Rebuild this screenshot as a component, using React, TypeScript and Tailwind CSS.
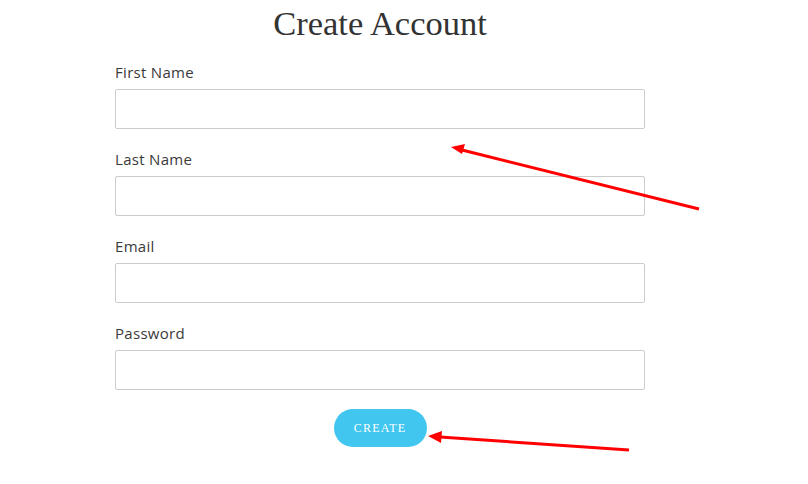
export default function App() {
  const fields = ['First Name', 'Last Name', 'Email', 'Password'];
  return (
    <div className="relative w-[808px] h-[484px] bg-white overflow-hidden">
      <div className="ml-[115px] w-[530px] flex flex-col pt-[3px]">
        <h1 className="text-center text-[34.5px] leading-[40px] text-[#333333] font-['Liberation_Serif',serif]">
          Create Account
        </h1>
        <div className="mt-[20px] flex flex-col gap-[21px]">
          {fields.map((f) => (
            <div key={f} className="flex flex-col">
              <label className="text-[15px] leading-[18px] tracking-[0.02em] text-[#3a3a3a] font-['Open_Sans',sans-serif] mb-[8px]">
                {f}
              </label>
              <input
                type={f === 'Password' ? 'password' : 'text'}
                className="h-[40px] w-full border border-[#cccccc] rounded-[2px] bg-white"
              />
            </div>
          ))}
        </div>
        <div className="mt-[19px] flex justify-center">
          <button className="w-[93px] h-[38px] rounded-full bg-[#41c6f0] text-white text-[12px] tracking-[0.1em] font-['Liberation_Serif',serif]">
            CREATE
          </button>
        </div>
      </div>
      <svg className="absolute inset-0 pointer-events-none" width="808" height="484">
        <line x1="699" y1="209" x2="462" y2="150" stroke="#ff0000" strokeWidth="3" />
        <polygon points="451,147 465,144 462,154" fill="#ff0000" />
        <line x1="629" y1="450" x2="440" y2="437" stroke="#ff0000" strokeWidth="3" />
        <polygon points="428,436 442,431 441,443" fill="#ff0000" />
      </svg>
    </div>
  );
}
